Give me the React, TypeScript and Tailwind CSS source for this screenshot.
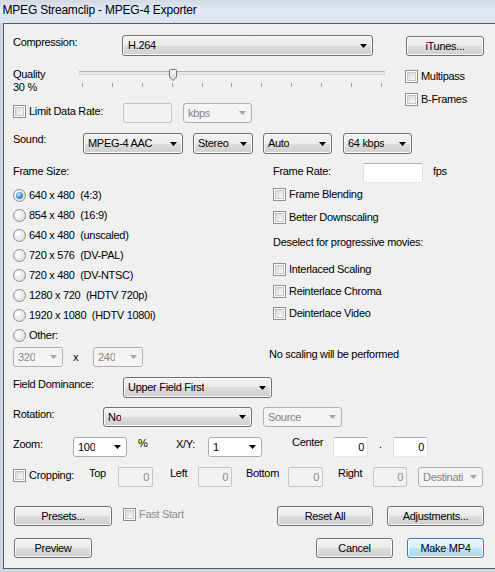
import React from "react";

// Windows 7 style widgets
const BTN =
  "flex items-center justify-center rounded-[3px] border border-[#707070] bg-[linear-gradient(#f2f2f2_0%,#ebebeb_50%,#dddddd_50%,#cfcfcf_100%)] shadow-[inset_0_0_0_1px_#fbfbfb]";
const BTN_FOCUS =
  "flex items-center justify-center rounded-[3px] border border-[#3c7fb1] bg-[linear-gradient(#eaf6fd_0%,#d9f0fc_50%,#bee6fd_50%,#a7d9f5_100%)] shadow-[inset_0_0_0_1px_#f4fbfe]";

function Arrow({ gray }: { gray?: boolean }) {
  return (
    <svg width="7" height="4" viewBox="0 0 7 4" className="shrink-0">
      <path d="M0 0H7L3.5 4Z" fill={gray ? "#a3a3a3" : "#000"} />
    </svg>
  );
}

function Select({
  value,
  className = "",
  disabled,
  editable,
}: {
  value: string;
  className?: string;
  disabled?: boolean;
  editable?: boolean;
}) {
  const look = disabled
    ? "border-[#adb2b5] bg-[#f4f4f4] text-[#838383]"
    : editable
      ? "border-[#abadb3] bg-white"
      : "border-[#707070] bg-[linear-gradient(#f2f2f2_0%,#ebebeb_50%,#dddddd_50%,#cfcfcf_100%)] shadow-[inset_0_0_0_1px_#fbfbfb]";
  return (
    <div
      className={`flex shrink-0 items-center justify-between rounded-[3px] border pl-[4px] pr-[5px] ${look} ${className}`}
    >
      <span className="truncate">{value}</span>
      <Arrow gray={disabled} />
    </div>
  );
}

function Input({
  value = "",
  className = "",
  disabled,
}: {
  value?: string;
  className?: string;
  disabled?: boolean;
}) {
  return (
    <div
      className={`flex shrink-0 items-center justify-end rounded-[2px] border pr-[3px] ${
        disabled
          ? "border-[#c2c5c8] bg-[#f2f2f2] text-[#8a8a8a]"
          : "border-[#abadb3] border-x-[#dbdfe6] border-b-[#e3e9ef] bg-white"
      } ${className}`}
    >
      {value}
    </div>
  );
}

function Box() {
  return (
    <span className="block h-[13px] w-[13px] shrink-0 border border-[#8e8f8f] bg-white p-[1px]">
      <span className="block h-full w-full border border-[#c4c8cd] bg-[linear-gradient(135deg,#d6d9dd,#f8f8f8)]" />
    </span>
  );
}

function Check({
  label,
  disabled,
  className = "",
}: {
  label: string;
  disabled?: boolean;
  className?: string;
}) {
  return (
    <div className={`flex items-start gap-[3px] ${className}`}>
      <Box />
      <span className={disabled ? "text-[#8d8d8d]" : ""}>{label}</span>
    </div>
  );
}

function Radio({ label, on }: { label: string; on?: boolean }) {
  return (
    <div className="flex h-[20px] items-start gap-[3px]">
      <span className="flex h-[13px] w-[13px] shrink-0 items-center justify-center rounded-full border border-[#8e8f8f] bg-[radial-gradient(circle_at_35%_35%,#ffffff,#d4d4d4)]">
        {on && (
          <span className="block h-[7px] w-[7px] rounded-full bg-[radial-gradient(circle_at_40%_35%,#bfe8ff,#3b8bd3_55%,#1a4f8e)]" />
        )}
      </span>
      <span className="whitespace-pre">{label}</span>
    </div>
  );
}

function Thumb() {
  return (
    <svg width="8" height="12" viewBox="0 0 8 12" className="absolute left-[90px] top-[3px]">
      <defs>
        <linearGradient id="tg" x1="0" y1="0" x2="0" y2="1">
          <stop offset="0" stopColor="#fdfdfd" />
          <stop offset="1" stopColor="#d8d8d8" />
        </linearGradient>
      </defs>
      <path d="M0.5 1.5Q0.5 0.5 1.5 0.5H6.5Q7.5 0.5 7.5 1.5V8L4 11.5L0.5 8Z" fill="url(#tg)" stroke="#707070" />
    </svg>
  );
}

const sizes = [
  "640 x 480  (4:3)",
  "854 x 480  (16:9)",
  "640 x 480  (unscaled)",
  "720 x 576  (DV-PAL)",
  "720 x 480  (DV-NTSC)",
  "1280 x 720  (HDTV 720p)",
  "1920 x 1080  (HDTV 1080i)",
];

export default function App() {
  return (
    <div className="relative h-[572px] w-[495px] overflow-hidden bg-[#ccd8e6] font-['Liberation_Sans',Arial,sans-serif] text-[11px] leading-[13px] tracking-[-0.3px] text-black">
      {/* Title bar */}
      <div className="h-[23px] bg-[linear-gradient(#d3dae3_0%,#e2e9f2_45%,#d9e4f2_100%)] pl-[2.5px] pt-[2.5px] text-[12px] leading-[14px] tracking-[-0.2px]">
        MPEG Streamclip - MPEG-4 Exporter
      </div>

      <div className="flex h-[546px]">
        <div className="w-[3px] shrink-0" />
        <div className="flex flex-1 flex-col border-y border-l border-[#5b5b5b] bg-[#f0f0f0] pl-[9px] pr-[11px]">
          {/* Compression */}
          <div className="mt-[11px] flex h-[21px] items-start">
            <span className="mt-[0.5px] w-[109px] shrink-0">Compression:</span>
            <Select value="H.264" className="h-[21px] w-[251px] !pl-[5px]" />
            <div className={`${BTN} ml-[33px] mt-[1px] h-[20px] w-[78px]`}>iTunes...</div>
          </div>

          {/* Quality / limit */}
          <div className="mt-[10px] flex h-[57px] items-start">
            <div className="w-[392px] shrink-0">
              <div className="flex h-[37px] items-start">
                <div className="mt-[1.5px] w-[66px] shrink-0">
                  <div>Quality</div>
                  <div>30 %</div>
                </div>
                <div className="relative h-[25px] w-[306px]">
                  <div className="mt-[5px] h-[4px] border border-[#d6d6d6] border-t-[#b0b0b0] bg-[#e7eaea]" />
                  <div className="mt-[8px] flex justify-between px-[3px]">
                    {Array.from({ length: 11 }).map((_, i) => (
                      <span key={i} className="block h-[4px] w-[1px] bg-[#a0a0a0]" />
                    ))}
                  </div>
                  <Thumb />
                </div>
              </div>
              <div className="flex h-[20px] items-start">
                <div className="w-[110px] shrink-0 pt-[2px]">
                  <Check label="Limit Data Rate:" />
                </div>
                <Input disabled className="h-[20px] w-[49px]" />
                <Select value="kbps" disabled className="ml-[11px] h-[20px] w-[69px]" />
              </div>
            </div>
            <div className="pt-[4px]">
              <Check label="Multipass" />
              <Check label="B-Frames" className="mt-[10px]" />
            </div>
          </div>

          {/* Sound */}
          <div className="mt-[10px] flex h-[21px] items-start">
            <span className="w-[70px] shrink-0">Sound:</span>
            <Select value="MPEG-4 AAC" className="h-[21px] w-[100px]" />
            <Select value="Stereo" className="ml-[10px] h-[21px] w-[60px]" />
            <Select value="Auto" className="ml-[10px] h-[21px] w-[69px]" />
            <Select value="64 kbps" className="ml-[11px] h-[21px] w-[69px]" />
          </div>

          {/* Frame size / frame rate */}
          <div className="mt-[9px] flex h-[204px] items-start">
            <div className="w-[260px] shrink-0">
              <div className="h-[26px] pt-[1.5px]">Frame Size:</div>
              {sizes.map((s, i) => (
                <Radio key={s} label={s} on={i === 0} />
              ))}
              <div className="h-[18px]">
                <Radio label="Other:" />
              </div>
              <div className="flex h-[20px] items-center">
                <Select value="320" disabled className="h-[20px] w-[50px]" />
                <span className="w-[30px] pl-[10px]">x</span>
                <Select value="240" disabled className="h-[20px] w-[50px]" />
              </div>
            </div>
            <div className="flex flex-col">
              <div className="flex h-[20px] items-start">
                <span className="mt-[1.5px] w-[90px] shrink-0">Frame Rate:</span>
                <Input className="h-[20px] w-[60px]" />
                <span className="ml-[10px] mt-[1.5px]">fps</span>
              </div>
              <Check label="Frame Blending" className="mt-[5px] h-[13px]" />
              <Check label="Better Downscaling" className="mt-[10px] h-[13px]" />
              <div className="mt-[12px]">Deselect for progressive movies:</div>
              <Check label="Interlaced Scaling" className="mt-[14px] h-[13px]" />
              <Check label="Reinterlace Chroma" className="mt-[9px] h-[13px]" />
              <Check label="Deinterlace Video" className="mt-[9px] h-[13px]" />
              <div className="-ml-[4px] mt-[27.5px]">No scaling will be performed</div>
            </div>
          </div>

          {/* Field dominance */}
          <div className="mt-[10px] flex h-[21px] items-start">
            <span className="mt-[0.5px] w-[110px] shrink-0">Field Dominance:</span>
            <Select value="Upper Field First" className="h-[21px] w-[149px]" />
          </div>

          {/* Rotation */}
          <div className="mt-[9px] flex h-[20px] items-start">
            <span className="mt-[0.5px] w-[90px] shrink-0">Rotation:</span>
            <Select value="No" className="h-[20px] w-[149px]" />
            <Select value="Source" disabled className="ml-[11px] h-[20px] w-[79px]" />
          </div>

          {/* Zoom */}
          <div className="mt-[10px] flex h-[20px] items-start">
            <span className="mt-[0.5px] w-[60px] shrink-0">Zoom:</span>
            <Select value="100" editable className="h-[20px] w-[54px]" />
            <span className="ml-[11px] w-[38px] shrink-0">%</span>
            <span className="mt-[0.5px] w-[32px] shrink-0">X/Y:</span>
            <Select value="1" editable className="h-[20px] w-[54px]" />
            <span className="-mt-[1.5px] ml-[30px] w-[41px] shrink-0">Center</span>
            <Input value="0" className="h-[20px] w-[35px]" />
            <span className="mt-[1px] w-[25px] shrink-0 pl-[11px]">.</span>
            <Input value="0" className="h-[20px] w-[35px]" />
          </div>

          {/* Cropping */}
          <div className="mt-[10px] flex h-[20px] items-start">
            <div className="w-[76px] shrink-0 pt-[2px]">
              <Check label="Cropping:" />
            </div>
            <span className="w-[29px] shrink-0">Top</span>
            <Input value="0" disabled className="h-[20px] w-[35px]" />
            <span className="ml-[17px] w-[28px] shrink-0">Left</span>
            <Input value="0" disabled className="h-[20px] w-[34px]" />
            <span className="ml-[14px] w-[42px] shrink-0">Bottom</span>
            <Input value="0" disabled className="h-[20px] w-[35px]" />
            <span className="ml-[15px] w-[35px] shrink-0">Right</span>
            <Input value="0" disabled className="h-[20px] w-[34px]" />
            <Select value="Destinati" disabled className="ml-[11px] h-[20px] w-[65px]" />
          </div>

          {/* Buttons */}
          <div className="mt-[19px] flex h-[20px] items-start">
            <div className={`${BTN} ml-[1px] h-[20px] w-[98px]`}>Presets...</div>
            <Check label="Fast Start" disabled className="ml-[11px] mt-[2px]" />
            <div className={`${BTN} ml-auto h-[20px] w-[96px]`}>Reset All</div>
            <div className={`${BTN} ml-[14px] h-[20px] w-[97px]`}>Adjustments...</div>
          </div>
          <div className="mt-[12px] flex h-[20px] items-start">
            <div className={`${BTN} ml-[1px] h-[20px] w-[78px]`}>Preview</div>
            <div className={`${BTN} ml-auto h-[20px] w-[77px]`}>Cancel</div>
            <div className={`${BTN_FOCUS} ml-[14px] h-[20px] w-[77px]`}>Make MP4</div>
          </div>
        </div>
      </div>
    </div>
  );
}
